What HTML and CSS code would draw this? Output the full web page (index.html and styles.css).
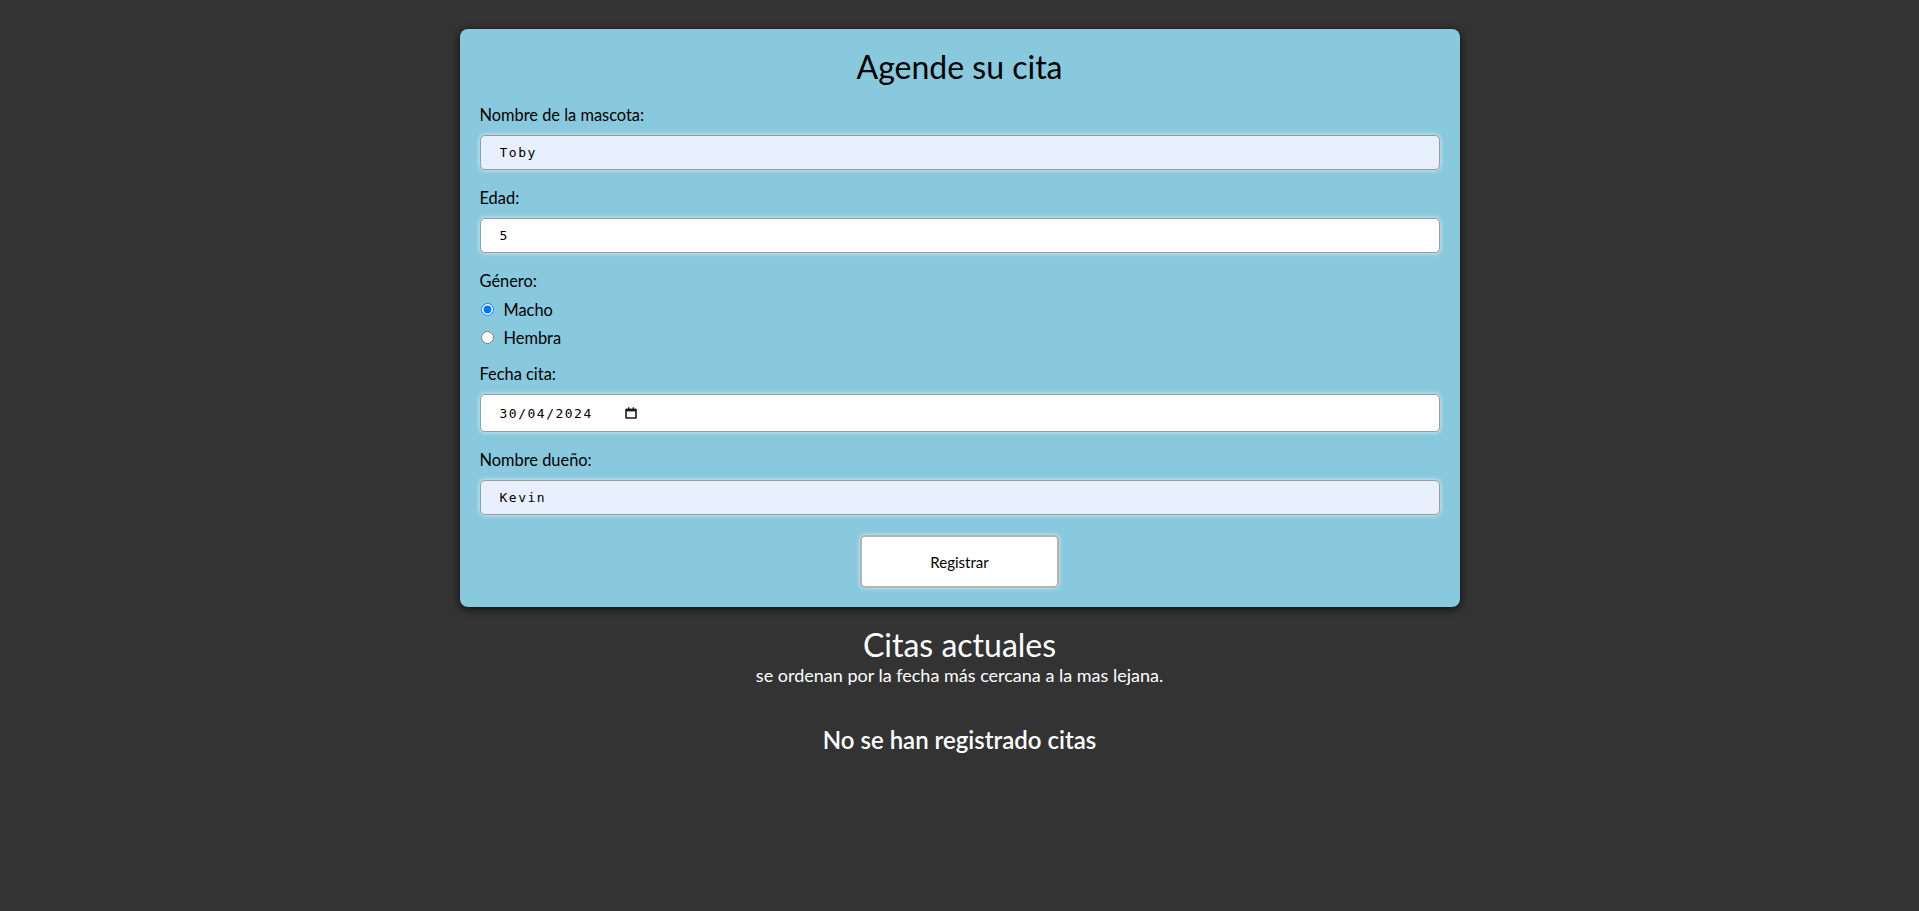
FILE: index.html
```html
<!DOCTYPE html>
<html lang="es">
<head>
<meta charset="utf-8">
<title>Veterinaria - Citas</title>
<link rel="stylesheet" href="styles.css">
</head>
<body>
  <main class="page">
    <form class="card">
      <h1 class="card-title">Agende su cita</h1>

      <div class="field">
        <label class="field-label" for="mascota">Nombre de la mascota:</label>
        <input class="field-input autofilled" id="mascota" type="text" value="Toby">
      </div>

      <div class="field">
        <label class="field-label" for="edad">Edad:</label>
        <input class="field-input" id="edad" type="number" value="5">
      </div>

      <div class="field field-radio">
        <span class="field-label">Género:</span>
        <label class="radio-row"><input class="radio" type="radio" name="genero" checked> Macho</label>
        <label class="radio-row"><input class="radio" type="radio" name="genero"> Hembra</label>
      </div>

      <div class="field">
        <label class="field-label" for="fecha">Fecha cita:</label>
        <div class="field-input field-date">
          <input class="date-text" id="fecha" type="text" value="30/04/2024">
          <svg class="date-icon" width="12" height="12" viewBox="0 0 12 12" aria-hidden="true">
            <path d="M1 2.5 H11 V11 H1 Z" fill="none" stroke="#1a1a1a" stroke-width="1.6" stroke-linejoin="round"/>
            <rect x="1" y="1.8" width="10" height="2.6" fill="#1a1a1a"/>
            <rect x="3" y="0.3" width="1.4" height="2.2" fill="#1a1a1a"/>
            <rect x="7.6" y="0.3" width="1.4" height="2.2" fill="#1a1a1a"/>
          </svg>
        </div>
      </div>

      <div class="field field-last">
        <label class="field-label" for="dueno">Nombre dueño:</label>
        <input class="field-input autofilled" id="dueno" type="text" value="Kevin">
      </div>

      <div class="actions">
        <button class="btn" type="button">Registrar</button>
      </div>
    </form>

    <section class="list">
      <h2 class="list-title">Citas actuales</h2>
      <p class="list-sub">se ordenan por la fecha más cercana a la mas lejana.</p>
      <h3 class="list-empty">No se han registrado citas</h3>
    </section>
  </main>
</body>
</html>
```
FILE: styles.css
```css
html, body {
  margin: 0;
  padding: 0;
  background: #333333;
  font-family: "Lato", "Noto Sans", sans-serif;
}

.page {
  display: flex;
  flex-direction: column;
  align-items: center;
  padding-top: 29px;
}

.card {
  box-sizing: border-box;
  width: 1000px;
  height: 578px;
  background: #89c9dd;
  border-radius: 8px;
  box-shadow: 0 2px 8px rgba(0, 0, 0, 0.75);
  padding: 19px 20px 19px 20px;
  display: flex;
  flex-direction: column;
}

.card-title {
  margin: 0 0 19px 0;
  font-size: 32px;
  line-height: 38px;
  font-weight: normal;
  text-align: center;
  color: #000;
}

.field {
  display: flex;
  flex-direction: column;
  margin-bottom: 18px;
}

.field-last {
  margin-bottom: 20px;
}

.field-label {
  font-size: 16.4px;
  line-height: 20px;
  color: #000;
  margin-bottom: 10px;
}

.field-radio {
  margin-bottom: 13px;
}

.field-radio .field-label {
  margin-bottom: 4px;
}

.radio-row {
  display: flex;
  align-items: center;
  height: 28px;
  font-size: 16.4px;
  color: #000;
}

.radio {
  width: 13px;
  height: 13px;
  margin: 0 10px 0 1px;
}

.field-input {
  box-sizing: border-box;
  width: 100%;
  height: 35px;
  margin: 0;
  padding: 0 10px 0 19px;
  border: 1px solid #9a9a9a;
  border-radius: 5px;
  background: #ffffff;
  box-shadow: 0 0 5px rgba(255, 255, 255, 0.75);
  font-family: "DejaVu Sans Mono", monospace;
  font-size: 13px;
  letter-spacing: 1.5px;
  color: #000;
  outline: none;
}

.field-input::-webkit-inner-spin-button,
.field-input::-webkit-outer-spin-button {
  -webkit-appearance: none;
  margin: 0;
}

.field-date {
  height: 38px;
  display: flex;
  align-items: center;
}

.date-text {
  width: 100px;
  margin: 0;
  padding: 0;
  border: none;
  background: transparent;
  font: inherit;
  letter-spacing: inherit;
  color: inherit;
  outline: none;
}

.date-icon {
  margin-left: 25px;
  flex: none;
}

.autofilled {
  background: #e8f0fe;
}

.actions {
  display: flex;
  justify-content: center;
}

.btn {
  width: 199px;
  height: 53px;
  background: #ffffff;
  border: 2px solid #b4b4b4;
  border-radius: 5px;
  box-shadow: 0 0 4px rgba(255, 255, 255, 0.7);
  font-family: "Lato", "Noto Sans", sans-serif;
  font-size: 15px;
  color: #000;
  cursor: pointer;
}

.list {
  display: flex;
  flex-direction: column;
  align-items: center;
  color: #ffffff;
  margin-top: 20px;
}

.list-title {
  margin: 0;
  font-size: 32px;
  line-height: 36px;
  font-weight: normal;
}

.list-sub {
  margin: 1px 0 0 0;
  font-size: 18px;
  line-height: 22px;
}

.list-empty {
  margin: 40px 0 0 0;
  font-size: 24px;
  line-height: 28px;
  font-weight: 600;
}
```
